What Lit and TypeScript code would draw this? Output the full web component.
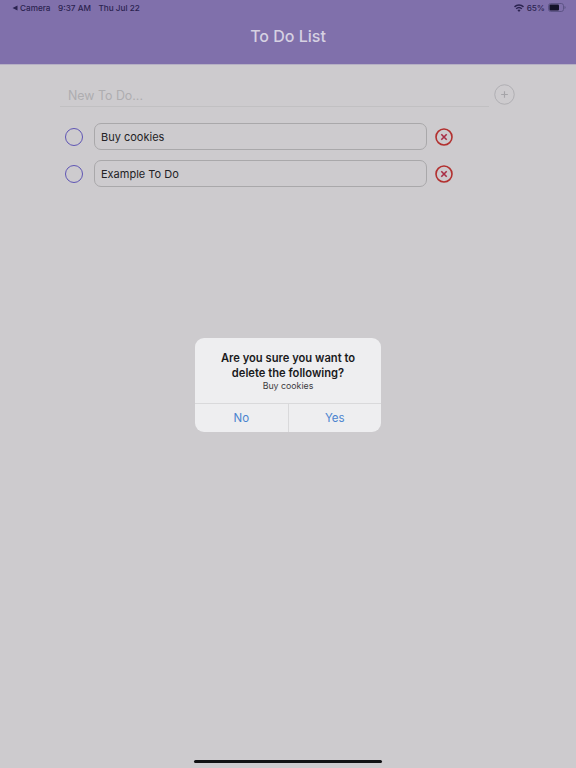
import { LitElement, html, css } from "lit";
import { customElement } from "lit/decorators.js";

const todos = ["Buy cookies", "Example To Do"];

@customElement("app-root")
export class AppRoot extends LitElement {
  static styles = css`
    :host {
      display: block;
      width: 576px;
      height: 768px;
      position: relative;
      overflow: hidden;
      background: #cdcbce;
      font-family: Inter, "Liberation Sans", sans-serif;
      color: #1d1c1f;
    }
    .header {
      height: 65px;
      box-sizing: border-box;
      background: #8070ab;
      border-bottom: 1px solid #b6b0c4;
      position: relative;
    }
    .status {
      display: flex;
      justify-content: space-between;
      align-items: center;
      height: 15px;
      padding: 0 10px 0 12px;
      font-size: 8.2px;
      color: #2b2350;
      font-weight: 500;
    }
    .status-left, .status-right {
      display: flex;
      align-items: center;
    }
    .status-left { gap: 7.5px; }
    .status-right { gap: 3px; }
    .back { display: flex; align-items: center; gap: 2px; }
    .title {
      text-align: center;
      margin-top: 9px;
      font-size: 16px;
      line-height: 24px;
      font-weight: 500;
      color: #d6d1e2;
    }
    .content {
      padding: 16px 0 0 60px;
    }
    .new-row {
      display: flex;
      align-items: flex-start;
      gap: 5px;
    }
    .new-input {
      width: 429px;
      height: 26px;
      box-sizing: border-box;
      padding: 5px 0 0 8px;
      border-bottom: 1px solid #c1c0c2;
      font-size: 12.4px;
      line-height: 20px;
      color: #aeadb0;
    }
    .add {
      display: block;
      margin-top: 3px;
    }
    .list {
      margin-top: 16px;
      display: flex;
      flex-direction: column;
      gap: 10px;
    }
    .item {
      display: flex;
      align-items: center;
      height: 27px;
      padding-left: 5px;
    }
    .check {
      width: 18px;
      height: 18px;
      box-sizing: border-box;
      border: 1px solid #5f55b4;
      border-radius: 50%;
    }
    .field {
      width: 333px;
      height: 27px;
      box-sizing: border-box;
      margin-left: 11px;
      padding: 1px 0 0 6px;
      border: 1px solid #a9a8aa;
      border-radius: 7px;
      font-size: 11px;
      line-height: 25px;
      color: #232225;
    }
    .del {
      display: block;
      margin-left: 8px;
    }
    .dialog {
      position: absolute;
      left: 195px;
      top: 338px;
      width: 186px;
      height: 94px;
      background: #eeeef0;
      border-radius: 9px;
      display: flex;
      flex-direction: column;
      text-align: center;
    }
    .dialog-body {
      height: 67px;
      box-sizing: border-box;
      padding-top: 13px;
      border-bottom: 1px solid #d9d9db;
    }
    .dialog-title {
      font-size: 11.2px;
      line-height: 14.5px;
      font-weight: 600;
      color: #1a1a1c;
    }
    .dialog-msg {
      margin-top: 0;
      font-size: 8.8px;
      line-height: 11px;
      color: #3c3c3f;
    }
    .dialog-actions {
      flex: 1;
      display: flex;
    }
    .dialog-actions div {
      flex: 1;
      font-size: 11.5px;
      line-height: 28px;
      color: #4a83cf;
    }
    .dialog-actions div + div {
      border-left: 1px solid #d9d9db;
    }
    .home {
      position: absolute;
      left: 194px;
      bottom: 5px;
      width: 188px;
      height: 3px;
      border-radius: 2px;
      background: #111113;
    }
  `;

  render() {
    return html`
      <div class="header">
        <div class="status">
          <div class="status-left">
            <span class="back">
              <svg width="6" height="6" viewBox="0 0 6 6"><path d="M0.5 3 5.5 0.5V5.5Z" fill="#2b2350"/></svg>
              Camera
            </span>
            <span>9:37 AM</span>
            <span>Thu Jul 22</span>
          </div>
          <div class="status-right">
            <svg width="10" height="8" viewBox="0 0 10 8" fill="#2b2350">
              <path d="M5 8 3.4 6.1a2.4 2.4 0 0 1 3.2 0Z"/>
              <path d="M2.7 5.3 1.7 4.2a4.9 4.9 0 0 1 6.6 0L7.3 5.3a3.5 3.5 0 0 0-4.6 0Z"/>
              <path d="M1 3.4 0 2.3a7.4 7.4 0 0 1 10 0L9 3.4a6 6 0 0 0-8 0Z"/>
            </svg>
            <span>65%</span>
            <svg width="18" height="9" viewBox="0 0 18 9">
              <rect x="0.5" y="0.5" width="15" height="8" rx="2.2" fill="none" stroke="#5d5486"/>
              <rect x="1.5" y="1.5" width="9.5" height="6" rx="1" fill="#14122a"/>
              <path d="M16.5 3v3a1.6 1.6 0 0 0 0-3Z" fill="#5d5486"/>
            </svg>
          </div>
        </div>
        <div class="title">To Do List</div>
      </div>
      <div class="content">
        <div class="new-row">
          <div class="new-input">New To Do...</div>
          <svg class="add" width="21" height="21" viewBox="0 0 22 22" fill="none">
            <circle cx="11" cy="11" r="10.2" stroke="#aeadb1" stroke-width="1"/>
            <path d="M11 7.5v7M7.5 11h7" stroke="#a5a4a8" stroke-width="1.2"/>
          </svg>
        </div>
        <div class="list">
          ${todos.map(
            (t) => html`
              <div class="item">
                <div class="check"></div>
                <div class="field">${t}</div>
                <svg class="del" width="18" height="18" viewBox="0 0 18 18" fill="none">
                  <circle cx="9" cy="9" r="8" stroke="#b2302f" stroke-width="1.6"/>
                  <path d="M6.3 6.3l5.4 5.4M11.7 6.3l-5.4 5.4" stroke="#a82e45" stroke-width="1.6"/>
                </svg>
              </div>
            `
          )}
        </div>
      </div>
      <div class="dialog">
        <div class="dialog-body">
          <div class="dialog-title">Are you sure you want to<br />delete the following?</div>
          <div class="dialog-msg">Buy cookies</div>
        </div>
        <div class="dialog-actions">
          <div>No</div>
          <div>Yes</div>
        </div>
      </div>
      <div class="home"></div>
    `;
  }
}
